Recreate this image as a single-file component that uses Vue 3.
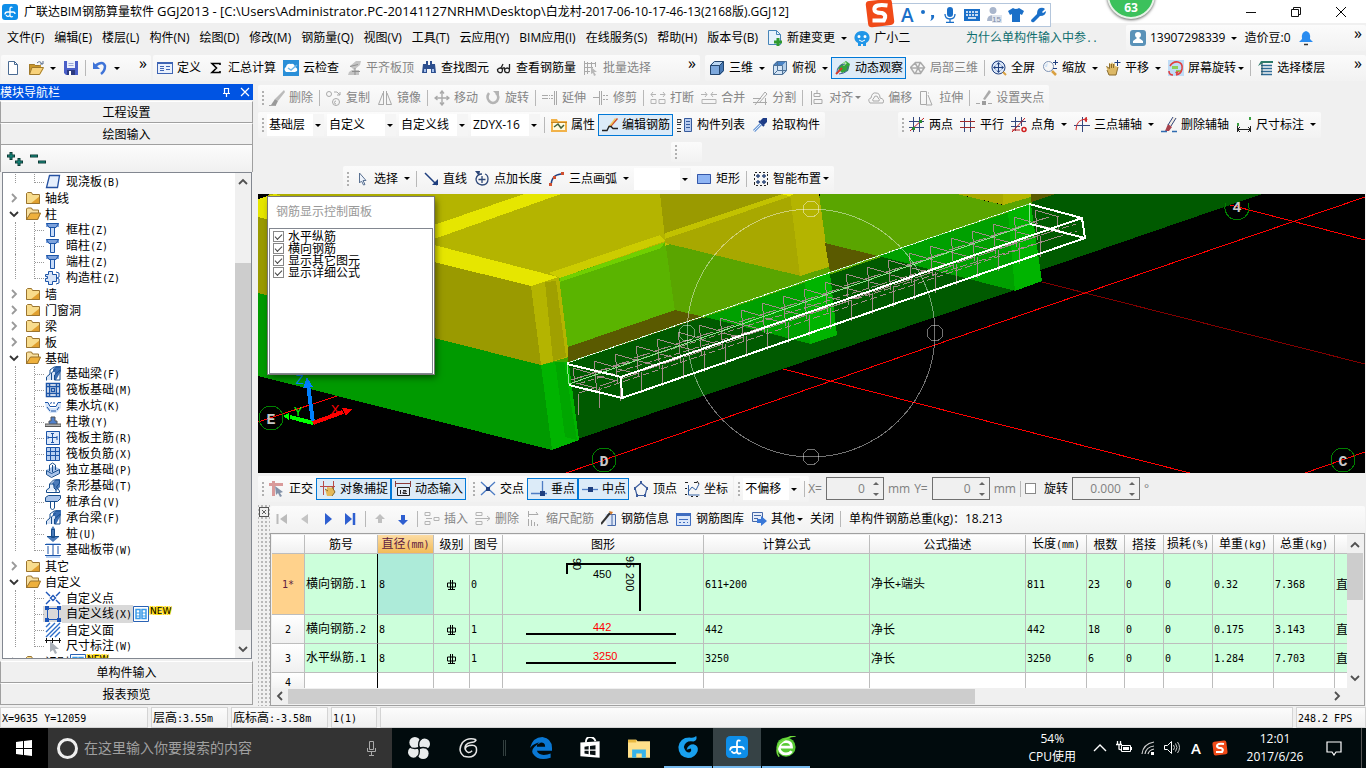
<script setup>
import { h, ref } from 'vue';

// 图标绘制辅助：s 描边，f 填充
const s = (d, c, w = 1) => `<path d="${d}" fill="none" stroke="${c}" stroke-width="${w}"/>`;
const f = (d, c) => `<path d="${d}" fill="${c}"/>`;
const navy = '#1f3f7f';
const gray = '#a9a9a9';
const tree = '#1c55a8';

const icons = {
  new: f('M3 1h7l3 3v11H3z', '#fff') + s('M3.5 1.5h6l3 3v10h-9zM9.500 1.500v3h3', '#4a6b93'),
  open: f('M1 4h5l1 1h6v3H4l-3 7z', '#c9962a') + f('M4 8h12l-4 7H1z', '#f8d27a') + s('M4 7.500h11.500l-4 7H1.500zM1.500 14V4.500h5l1 1h4', '#a07a2c') + s('M9 3q3-3 5 1m1-3v3h-3', '#5b6f8c'),
  save: f('M1 1h14v14H3l-2-2z', '#4a5fc8') + f('M4 1h8v7H4z', '#eef2fb') + f('M4 10h8v5H4z', '#2b3a80') + f('M6 11h2v4H6z', '#fff') + s('M5.500 3.500h5M5.500 5.500h5', '#9aa7d8'),
  undo: s('M3 6q8-6 10 0 0 5-4 8', '#3f74d8', 2.500) + f('M1 2v7h7z', '#3f74d8'),
  define: f('M0 2h16v12H0z', '#3e64b4') + f('M1 4h14v9H1z', '#e9f0fc') + s('M3 6.500h4M3 8.500h4M3 10.500h4M9 6.500h4M9 9.500h4', '#3e64b4'),
  sigma: s('M12 5V3.500H4L8.500 8 4 12.500h8V11', '#000', 1.600),
  cloud: f('M0 0h16v16H0z', '#2a8fd8') + f('M3 12Q0 9 3 7q1-4 5-3 3-1 4 3 3 1 2 4l-2 1z', '#fff') + s('M5 8l3 2 6-5', '#6fb7e8', 1.500),
  flat: f('M4 6l6-5h5l-1 4-6 5zM6 10h7v5H2l1-3z', '#c4c4c4') + s('M4 6.500l8-2M6 11.500h8M9 8v7', '#8f8f8f'),
  find: f('M2 4h3v-3h2v4h2v-4h2v3h3l1 9h-5v-4H6v4H1z', '#2d4f8e') + f('M3 9h2v3H3zM11 9h2v3h-2z', '#a5c0ee'),
  glasses: s('M1.500 9.500q3-3 5 0 0 4-3 3-2 0-2-3zM8.500 9.500q3-3 5 0 0 4-3 3-2 0-2-3zM6 9l1-1h2M5 8l2-4M13.500 9V4', '#222', 1.300),
  batch: s('M1.500 1v14M1 3.500h12M4.500 2v12M1 7.500h9M8.500 2v7M1 11.500h6M12.500 2v5', gray) + f('M8 7l6 5-3 0 2 3-2 1-1-3-2 1z', '#b9b9b9'),
  cube: f('M1 5l4-4h10l-4 4z', '#bcd7f2') + f('M1 5h10v10H1z', '#7da8dc') + f('M11 5l4-4v10l-4 4z', '#4678b4') + s('M1.500 5.500h9v9h-9zM1.500 5.500l4-4h9v9l-4 4M10.500 5.500l4-4', '#24466e'),
  topview: f('M1 5l4-4h10l-4 4z', '#4a84c6') + f('M1 5h10v10H1z', '#d6e6f6') + f('M11 5l4-4v10l-4 4z', '#b4cfe9') + s('M1.500 5.500h9v9h-9zM1.500 5.500l4-4h9v9l-4 4M5.500 1.500v9l-4 4M5.500 10.500h9', '#4e7298'),
  orbit: f('M5 5l6-4 4 3-2 7-6 2-4-4z', '#35a43a') + f('M7 4l3-2 2 1-3 3z', '#b9eeb0') + s('M1 14l6-6', '#d23a2a', 2) + s('M2 12q0-7 8-8m3 2q1 7-9 8', '#44639a'),
  part3d: s('M5.500 2.500h5l4 5-4 6h-6l-4-6zM5 3l3 5-3 6M10 3L8 8l3 5M1 8h13', '#aaa', 1.500),
  full: f('M7 0a7 7 0 100 14A7 7 0 007 0z', '#dbe7f8') + s('M7.500 1a6.500 6.500 0 100 13 6.500 6.500 0 000-13zM7.500 3v9M3 7.500h9M6 4.500l1.500-2 1.500 2M6 10.500l1.500 2 1.500-2M4.500 6l-2 1.500 2 1.500M10.500 6l2 1.500-2 1.500', navy) + s('M12 12l3 3', '#d9a040', 2),
  zoom: s('M6.500 1.500a5 5 0 100 10 5 5 0 000-10z', '#7e93b4') + f('M6 3q-3 1-3 4h2z', '#cfe2f6') + s('M10 11l4 4', '#d9a040', 2.500) + s('M13.500 0v5M11 2.500h5M11 8.500h4', navy),
  pan: f('M1 6l3 2V3l2 1 1-2 1 2 2-1v3l3 1-2 8H4z', '#dcb866') + s('M1.500 6.500l3 2V3.500M6.500 4v4M8.500 4v4M13 7l-2 8H4l-2-5', '#8a6b2a') + s('M12.500 0v6M9.500 2.500h6', navy),
  screen: f('M0 0h16v16H0z', '#bfdcf6') + f('M4 6h6v3H4zM8 10h5v2H8z', '#8ccf57') + s('M2 6q3-5 8-4 5 1 4 7-1 5-6 6m-7-4q0 4 4 4', '#e14040', 1.600) + f('M7 12l4-1-2 4z', '#e14040'),
  floors: f('M4 1h12v2H6L1 6z', '#2d7a6a') + s('M4 5.500h11M4 8.500h11M4 11.500h11M4 14.500h11', '#2f6b96', 1.500) + s('M5 3v12', '#24505c'),
  brush: f('M15 0l1 2-7 9-3-2z', '#bbb') + f('M6 9l3 2-2 4H2z', '#999') + s('M0 15.500h7', gray),
  copy: s('M3 1.500a2.500 2.500 0 100 5 2.500 2.500 0 000-5zM10 8.500a3.500 3.500 0 100 7 3.500 3.500 0 000-7zM10 11a1.500 1.500 0 100 3M8 2h3l3 3m0-3v3h-3', gray),
  mirror: s('M6.500 1v14M9.500 1v14M6 3L1.500 14.500H6M10 3l4.500 11.500H10', gray),
  move: s('M8 1v14M1 8h14M6 3.500L8 1l2 2.500M6 12.500L8 15l2-2.500M3.500 6L1 8l2.500 2M12.500 6L15 8l-2.500 2', gray, 1.400),
  rotate: s('M4 3q-3 4 0 8 4 4 8 0 3-5-1-8', '#b4b4b4', 2.500) + f('M8 1h6v6z', '#b4b4b4'),
  extend: s('M0 5.500h6M0 8.500h6M12.500 1v14M14.500 1v14', gray) + s('M7 5.500h1m1 0h2M7 8.500h1m1 0h2', gray),
  trim: s('M8.500 1v14M6.500 1v14M0 7.500h6M10 5.500h2m1 0h2M10 9.500h2m1 0h2', gray),
  break: s('M1 4.500h5M10 4.500h5M3 2L1 4.500 3 7M13 2l2 2.500-2 2.500M1 9.500h5v4H1zM9 9.500h6v4H9z', '#b4b4b4'),
  merge: s('M0 4.500h6M10 4.500h6M4 2l2 2.500L4 7M12 2l-2 2.500 2 2.500M1 9.500h14v4H1z', '#b4b4b4'),
  split: s('M1 8.500h8M1 12.500h14M13.500 8v7M3 15L13 2l2 2-8 9', gray),
  align: s('M2.500 1v14M5 3.500h6v3H5zM5 9.500h8v4H5zM8 0v3', gray),
  offset: s('M2 13q-3-4 1-5 1-6 5-5 4 0 4 5 5 1 3 5zM5 11q-1-2 1-3 0-2 2-2t2 2q2 1 1 3z', gray),
  stretch: s('M1.500 1.500h6v13h-6zM9 5l4 10H7M9 3h1', gray),
  gripset: f('M13 0l2 2-6 8-2-1z', '#aaa') + s('M0 13.500h4M12 13.500h4', gray) + f('M6 11h4v4H6z', '#9c9c9c'),
  prop: f('M0 2h6l1 2h9v11H0z', '#f1b24a') + f('M2 6h12v7H2z', '#fffbe0') + s('M3 10l4-3 3 4 3-3', '#45603a', 1.500) + s('M0 5.500h16', '#c98520'),
  editbar: f('M15 1l1 1-7 8-2-1z', '#d04b28') + f('M13 1l1 1-6 8-2 0z', '#f0c860') + s('M0 13.500h5l2-4h2l2 2h5', '#222', 1.400),
  list: s('M0 2.500h4v3H0zM0 7.500h4M0 11.500h4M0 14.500h4', '#333') + f('M7 1h8v13H7z', '#b9cdf0') + s('M7.500 1.500h7v13h-7zM9 4.500h4M9 7.500h4M9 10.500h4', '#365a9c'),
  picker: f('M11 1h4v4l-3 3-4-4z', '#1e3c86') + s('M7 4l5 5', '#1e3c86', 2) + s('M9 7l-7 7', '#6c9ad8', 3) + s('M9 7l-7 7', '#dfeaf8'),
  axis2: s('M4.500 0v15M10.500 0v15M0 4.500h15M0 10.500h15', '#33477e') + s('M1 14L15 1', '#c02020') + f('M3 10h3v3H3zM10 3h3v3h-3z', '#2a8a30'),
  axisPar: s('M4.500 1v14M10.500 1v14', '#33477e') + s('M0 4.500h15M0 10.500h15', '#a02a2a'),
  axisAngle: s('M4.500 0v14M10.500 0v9M0 4.500h15M0 9.500h9', '#33477e') + s('M1 15L14 1M1 13h8', '#c02020') + s('M13 10.500a2 2 0 100 4 2 2 0 000-4z', '#d02020', 1.500),
  axis3: s('M8.500 0v15M0 8.500h16', '#33477e') + s('M2 13Q2 2 13 2', '#d03030') + s('M2 12.500h.1M13 1.500a1 1 0 100 2', '#d03030', 3),
  axisDel: f('M12 0l4 1-6 9-3-1z', '#f2ede4') + f('M7 7l4 3-3 4H4z', '#a8424c') + s('M15 1l-5 8M12 0L7 8', '#33477e') + s('M0 14.500h6M11 14.500h5', '#2f6bb0', 1.500),
  dim: s('M1.500 9v6M14.500 9v6M1 12.500h14M4 10l-2.500 2.500L4 15M12 10l2.500 2.500L12 15', '#222') + f('M1 6h2v3H1zM13 0h2v3h-2z', '#3aa040'),
  select: f('M5 2l7 7H9l2 4-2 1-2-4-2 2z', '#eef3fb') + s('M5.500 2v10l2-2 2 4 1.500-.5-2-4h3z', '#5b7292'),
  line: s('M2 2l12 12', navy, 1.500) + f('M9 14h6V8z', navy),
  pointlen: s('M8 3q-5 0-6 5 0 5 6 6 6 0 6-6 0-4-3-5M8 5v7M4.500 8.500h7', '#2d4778', 1.300) + f('M1 0h5l-1 5z', '#2d4778'),
  arc: s('M2 15Q2 4 12 3', navy, 1.300) + f('M0 12h3v3H0zM4 5h3v3H4zM12 1h3v3h-3z', '#d05030'),
  rect: f('M1 3h14v10H1z', '#8fb5f4') + s('M1.500 3.500h13v9h-13z', '#3557a8'),
  smart: s('M2 1.500h2m2 0h2m2 0h2m2 0h1M1.500 3v2m0 2v2m0 2v3M14.500 3v2m0 2v2m0 2v3M3 14.500h2m2 0h2m2 0h2', '#222') + s('M5 3v4M3 5h4M11 3v4M9 5h4M5 9v4M3 11h4M11 9v4M9 11h4', '#2d4778', 1.400),
  ortho: s('M0 3.500h14M4.500 0v15', '#d99a9a', 3) + f('M6 5l8 6-3 1 2 3-2 1-2-4-2 2z', '#8392a8'),
  snap: s('M3.500 0v14M13.500 0v8M0 5.500h15', '#b84a4a') + f('M5 8l2 1V6l6 1 2 4-3 4H7z', '#e4b95a') + s('M5 8l3 2M12 6l3 5-3 4', '#86682a'),
  dynin: s('M0 2.500h16M.5 0v6M15.500 0v6', '#8c3a3a') + f('M2 6h13v9H2z', '#e6edf6') + s('M2.500 6.500h12v8h-12z', '#222') + s('M5.500 9v4M8 9.500h3v1.500H8v1.500h4', '#222'),
  cross: s('M1 1l14 13M15 1L1 14', '#4d7cc4', 1.300) + f('M6 6h4v4H6z', navy),
  perp: s('M0 12.500h16M11.500 0v12', '#4d7cc4', 1.300) + f('M9 10h5v5H9z', navy),
  mid: s('M0 8.500h16', '#4d7cc4', 1.300) + f('M6 6h5v5H6z', navy),
  vertex: s('M8 2l6 5-2 7.500H4L2 7z', '#3c5c9c', 1.200) + f('M7 0h2v3H7zM1 6h2v3H1zM13 6h2v3h-2zM3 13h2v3H3zM11 13h2v3h-2z', '#3c5c9c'),
  coord: s('M4.500 4v10h11M4 11l4-5 4 3 3-6', '#3563a5') + s('M1 1.500h3M10 1.500h3M1 7.500h2M1 13.500h2M7 15.500h2M12 15.500h2M13 0l2 3', '#222'),
  first: s('M3.500 3v10', '#bbb', 2) + f('M13 3v10L6 8z', '#bbb'),
  prev: f('M11 3v10L4 8z', '#c4c4c4'),
  play: f('M5 2v12l7-6z', '#2e5fd0'),
  last: f('M2 2v12l7-6z', '#2e5fd0') + s('M11 2v12', '#2e5fd0', 2.500),
  up: f('M8 3l5 5h-3v4H6V8H3z', '#c0c0c0'),
  down: f('M8 14L3 9h3V4h4v5h3z', '#2e5fd0'),
  insert: s('M1 1.500h5v3H1zM1 10.500h5v3H1zM10 6.500h5v3h-5zM2 7.500h6', '#b4b4b4'),
  remove: s('M1 1.500h6v3H1zM1 10.500h6v3H1zM0 7.500h15M12 5l3 2.500-3 2.500', '#b4b4b4'),
  scale: s('M2.500 0v6M2 3.500h10M10 1l2 2.500M2.500 8v7M5.500 9v6M8.500 11v4M11.500 13v2', '#aaa'),
  info: f('M4 3h10v12H6z', '#dfe8f7') + s('M6.500 3.500h8v11h-8M11 4v10', '#4668a8') + s('M0 13L9 2', '#333', 2) + f('M8 0l4 1-2 3z', '#d07828'),
  lib: f('M0 2h15v13H0z', '#dbe7fa') + f('M0 2h15v3H0z', '#3f6dc0') + s('M.5 2.500h14v12H.5zM3 8.500h9M3 11.500h2m2 0h2m2 0h1', '#3f6dc0'),
  other: f('M1 1h11v10H1z', '#e6edf9') + s('M1.500 1.500h10v9h-10zM3 4.500h7M3 7.500h4', '#4668a8') + f('M6 8h4V5l6 5-6 5v-3H6z', '#3a78d8'),
  change: f('M3 0h7l3 3v12H1V0z', '#e6f2fc') + s('M1.500 .5h8l4 4v10h-12zM9.500 .5v4h4', '#4684b8') + s('M11 8v8M7 12h8', '#2f9a30', 3),
  mascot: f('M1 5Q3 1 8 1t7 4q2 5-3 8v3H9v-2H7v2H4v-3Q-1 10 1 5z', '#2196e8') + f('M5 5a1.500 1.500 0 100 3 1.500 1.500 0 000-3zM11 5a1.500 1.500 0 100 3 1.500 1.500 0 000-3z', '#fff') + s('M5 10q3 3 6 0', '#fff'),
  account: '<rect width="16" height="16" rx="3" fill="#5a92b8"/>' + f('M8 2a3 3 0 013 3q0 2-2 3l4 3v2H3v-2l4-3Q5 7 5 5a3 3 0 013-3z', '#fff'),
  bell: f('M8 1q5 1 4 8l3 3H1l3-3Q3 2 8 1z', '#2a8cf0') + s('M6 14.500h4', '#333', 1.500),
  // 导航树
  folder: f('M1 3h6l1 2h7v9H1z', '#f8dc8c') + f('M5 14l10-8v8z', '#e0a030') + s('M1.500 13.500v-10l1-1h4l1 2h7v9z', '#9a7430'),
  folderOpen: f('M1 2h6l1 2h6v3H5l-4 7z', '#f8e0a0') + f('M5 7h11l-3 7H1z', '#eeb03c') + s('M1.500 14V3l1-1h4l1 2h6v3M1.500 13.500l4-6.500h10l-3 6.500z', '#9a7430'),
  slab: f('M4 1h11l-2 13H1z', '#e6effc') + s('M4.500 1.500h10l-2 12H1.500z', '#2450a0', 1.300),
  column: f('M1 1h13v4H1z', '#7da2dc') + f('M5 5h5v10H5z', '#c9dcf8') + s('M1.500 1.500h12L11 5.500H4zM5.500 5.500v9h4v-9', tree),
  columnX: f('M4 1h4v3h4v8H8v3H3v-4H1V5h3z', '#d7e4f7') + s('M3.500 1.500h4v3h4v7h-4v3h-4v-3h-3v-3h2v-2h-2v-2h3zM11 2l3 1v4l-2 1 2 1v4l-3 1', tree),
  beam: f('M8 3l3-3h5v5l-5 9H8z', '#3a6eb4') + f('M1 14h9V6H5z', '#d7e4f7') + s('M1.500 14.500V11L5 8V4l4-3h6M6.500 14V7l4-4M9.500 14V9L15 4v10h-5z', '#174d8c'),
  raft: s('M1.500 1.500h13v13h-13zM4.500 2v12M11.500 2v12M2 4.500h12M2 11.500h12M6.500 6.500h3v3h-3z', tree, 1.500),
  pit: f('M0 5h3l2 5h6l2-5h3v5l-5 5H5l-4-5z', '#d5e5fa') + s('M0 4.500h3l2 4h6l2-4h3M2 9l3 4M6 13h5M12 12l2-3M5 5.500l2-1M9 4v2', tree),
  pier: f('M6 3h4v4h2v3H4V7h2z', '#4f80cc') + f('M0 10h16v3H0z', '#b4b4b4') + s('M0 12.500h16V10H0zM4 9.500V7h2V3h4v4h2v3', '#555'),
  mainbar: f('M1 1h14v14H1z', '#dce9fb') + s('M1.500 1.500h13v13h-13zM7.500 3v10M3 7.500h9M3 6v3M12 6v4M6 3.500h3M6 12.500h3', tree),
  negbar: f('M1 1h14v14H1z', '#b7d0f2') + s('M1.500 1.500h13v13h-13zM5.500 2v12M10.500 2v12M2 5.500h12M2 9.500h12', tree),
  isolated: f('M1 8l8-4 6 3v4l-9 4-5-3z', '#a9c4ea') + s('M1.500 8.500l5 3 8-4v4l-8 4-5-3zM4.500 9V3l3-2 3 2v5M7.500 3v7', '#174d8c'),
  strip: f('M1 13h9L7 6H5z', '#e6f0fc') + f('M7 5l4-4h4v8l-4 4z', '#4d7cba') + s('M1.500 14.500V12l3-2V6l4-4h6v3l-3 4 3 4v1.500zM5 6h4v4l2 2v2', '#174d8c'),
  cap: f('M1 3l3-2h11v4l-2 2H1z', '#a9c4ea') + s('M.5 3.500l3-2h12v3l-3 3H.5zM5.500 7v7l2 2 2-2V7', '#174d8c'),
  pile: f('M6 3l2-3 2 3v7l4 1-6 5-6-5 4-1z', '#4a7ab8') + s('M6.500 3.500h3v8h-3zM2 10.500h12', '#174d8c'),
  band: f('M1 13h14v3H1zM1 1h14v2H1z', '#b7d0f2') + s('M0 2.500h16M0 13.500h16M8 3v10M3 4v8M13 4v8', tree),
  point: s('M1 2l4 4M15 2l-4 4M1 14l4-4M15 14l-4-4M8 5.500L10.500 8 8 10.500 5.500 8z', '#1c55b8', 1.400),
  lineDef: s('M2.500 2.500h11v11h-11z', '#1c55b8') + f('M0 0h4v4H0zM12 0h4v4h-4zM0 12h4v4H0zM12 12h4v4h-4z', '#1c55b8'),
  face: s('M1 5l4-4M1 10l9-9M1 15L15 1M5 15L15 5M10 15l5-5', '#2c6cc8', 1.400),
  dimTree: s('M1.500 0v5M7.500 0v5M14.500 0v5M0 2.500h16', '#111') + f('M5 3v11l3-2 2 4 2-1-2-4h4z', '#aab0b8'),
  table: f('M0 0h16v16H0z', '#fff') + s('M.5 .5h15v15H.5z', '#2a62b4') + s('M3 3.500h4v9H3zM9 3.500h4v9H9z', '#3a9ae8', 1.500) + s('M3 7h4M9 7h4M3 10h4M9 10h4', '#3a9ae8'),
  // 标题与任务栏
  app: '<rect width="16" height="16" rx="3" fill="#0e8ee9"/>' + s('M10.500 3.500Q8 2.500 8 5v6q0 2.500 3 1.500M3 10.500Q3 8 5.500 8H11q2 0 2 2M8 11.500q-2.500 2-4-.5', '#fff', 1.300),
  win: f('M0 2l7-1v7H0zM8 1l8-1v8H8zM0 9h7v6l-7-1zM8 9h8v7l-8-1z', '#fff'),
  fan: '<g fill="#e9ecec"><circle cx="5" cy="4" r="4"/><circle cx="12" cy="5" r="4"/><circle cx="11" cy="12" r="4"/><circle cx="4" cy="11" r="4"/></g>' + s('M8 8Q7 3 10 1M8 8q5-1 7 1M8 8q1 5-2 7M8 8Q3 9 1 7', '#0a1214'),
  swirl: s('M14 2Q8 0 4 4q-4 6 1 10 7 2 9-3 1-5-3-5-5 0-5 3 2 4 5 1M14 2q-1 2-4 2-5 1-4 5', '#e6e6e6', 1.100),
  edge: f('M0 8Q2 0 9 0q7 1 7 8v2H5q1 3 5 3 3 0 5-1v3q-9 3-13-3Q0 8 8 4 3 4 0 8zM5 7h6q0-3-3-3T5 7z', '#0a78d4'),
  store: f('M1 4l14-1v12L1 14z', '#fff') + s('M5 4q0-4 3-4 3 0 4 3', '#fff', 1.300) + f('M4 7l3-.4V9H4zM8 6.500l4-.5v3H8zM4 10h3v2.600L4 12zM8 10h4v3.300l-4-.6z', '#0a1214'),
  files: f('M0 2h6l1 1h9v12H0z', '#ffe08a') + f('M3 9h10v6h-3v-3H6v3H3z', '#36b2ea') + f('M0 2h6v2H0z', '#e8b840'),
  glodon: f('M14 0q1 3-2 4-6-1-7 4 1 4 4 4 2-1 1-3l-3 1q1-4 5-4 4 1 3 5-2 5-7 5-7-1-7-8 1-7 8-7 3 1 5-1z', '#18a0ee'),
  browser: '<circle cx="8" cy="8" r="7" fill="#57c934"/>' + s('M3 8h9q0-4-4-4-5 0-5 5 1 4 5 4 3 0 4-2', '#fff', 2) + s('M15 0Q9 0 3 6q-3 5 0 9', '#6fdc3c', 1.200),
  sogou: '<rect x="1" y="1" width="14" height="14" rx="2" fill="#f04a18" transform="rotate(-7 8 8)"/>' + s('M12 4Q5 3 5 6q0 2 4 2 3 1 1 4H4', '#fff', 2.200),
  mic: '<rect x="5" y="0" width="6" height="10" rx="3" fill="currentColor"/>' + s('M3 7q0 5 5 5t5-5M8 12v3M4 15.500h8', 'currentColor', 1.300),
  micLine: s('M5.500 1.500h4v8h-4zM3.500 8v3.500h8V8M7.500 12v3M5 15.500h5', '#aaa'),
  punct: f('M3 3a2 2 0 110 4 2 2 0 010-4zM11 8h3q1 4-4 6 2-2 1-6z', '#1a6fc8'),
  keys: f('M0 2h16v12H0z', '#1a6fc8') + s('M2 5h12M2 8h12', '#fff', 1.500) + s('M4 11h8', '#fff', 1.500) + s('M4.500 3v6M7.500 3v6M10.500 3v6', '#1a6fc8'),
  person: f('M7 0a3 3 0 010 7 3 3 0 010-7zM1 14q0-6 6-6 5 0 6 6z', '#a9b6cc') + f('M6 8h10v8H6z', '#dfe5ee') + '<text x="6" y="15" font-size="8" font-family="Liberation Sans" fill="#7c8ca8">15</text>',
  shirt: f('M5 1q3 2 6 0l5 3-2 4-2-1v8H4V7L2 8 0 4z', '#1a6fc8'),
  wrench: f('M10 1q3-1 5 1l-3 3 1 1 3-2q0 5-6 5l-6 6q-3 1-3-2l6-6q0-5 3-6z', '#1a6fc8'),
  battery: s('M5.500 5.500h9v6h-9z', '#fff') + f('M7 7h6v3H7zM14 7h2v3h-2z', '#fff') + s('M1.500 1v3M4.500 1v3M0 4.500h6M3 5v4l2 1', '#fff', 1.300),
  wifi: s('M2 14Q3 4 14 2M5 14q1-7 9-8M8 14q1-4 6-5', '#cfcfcf', 1.200) + f('M11 12h3v3h-3z', '#fff'),
  volume: s('M.5 5.500h3l4-4v12l-4-4h-3z', '#fff') + s('M9.500 5q2 2.500 0 5M11.500 3.500q3 4 0 8M13.500 2q4 5.500 0 11', '#ccc'),
  chevUp: s('M4 10l4-4 4 4', 'currentColor', 1.800),
  chevWide: s('M2 11l6-6 6 6', 'currentColor', 1.400),
  chevDown: s('M4 6l4 4 4-4', 'currentColor', 1.800),
  chevLeft: s('M10 4L6 8l4 4', 'currentColor', 1.800),
  chevRight: s('M6 4l4 4-4 4', 'currentColor', 1.800),
  notice: s('M1 2h14v10h-5l-2 3-2-3H1z', '#fff', 1.200),
  plus: s('M4 1v8M0 5h8M12 7v8M8 11h8', '#0d3a35', 3) + s('M4 2v6M1 5h6M12 8v6M9 11h6', '#16968a'),
  minus: s('M0 5h8M8 11h8', '#0d3a35', 3) + s('M1 5h6M9 11h6', '#16968a'),
  pin: s('M5.500 4v5M9.500 4v5M4 9.500h7M5 4.500h5M7.500 10v3', '#fff', 1.200),
  close: s('M4 4l8 8M12 4l-8 8', 'currentColor', 1.200),
  closeBig: s('M3 3l10 10M13 3L3 13', 'currentColor'),
  min: s('M3 8.500h10', '#111'),
  restore: s('M3.500 5.500h7v7h-7zM5.500 5V3.500h7v7H11', '#111')
};

const Icon = (props) => h('svg', { class: 'icon', viewBox: '0 0 16 16', innerHTML: icons[props.name] });
Icon.props = ['name'];

// 宋体风格：西文部分使用半角等宽字体
const Song = (props) => h('span', { class: 'song' }, props.text.split(/([\x20-\x7e]+)/).filter(Boolean).map(
  (t) => /^[\x20-\x7e]/.test(t) ? h('span', { class: 'half' }, t) : t
));
Song.props = ['text'];

const renderItem = (it) => {
  if (it === '|') return h('span', { class: 'sep' });
  if (it === ':') return h('span', { class: 'grip' });
  if (it === '>>') return h('span', { class: 'more' }, '»');
  if ('combo' in it) {
    return h('span', { class: ['combo', it.size] }, [
      h('select', { 'aria-label': it.name }, [h('option', it.combo)])
    ]);
  }
  if (it.text) return h('span', { class: 'caption' }, it.text);
  return h('button', {
    type: 'button',
    class: ['tool', { active: it.on, tight: it.tight }],
    disabled: it.off,
    title: it.label || it.icon
  }, [
    it.icon && h(Icon, { name: it.icon }),
    it.label && h('span', it.label),
    it.drop && h('i', { class: 'drop' })
  ]);
};
const Strip = (props) => h('div', { class: 'strip' }, props.items.map(renderItem));
Strip.props = ['items'];

const b = (icon, label, extra = {}) => ({ icon, label, ...extra });
const off = { off: true };
const on = { on: true };
const drop = { drop: true };
const tight = { drop: true, tight: true };

const menus = ['文件(F)', '编辑(E)', '楼层(L)', '构件(N)', '绘图(D)', '修改(M)', '钢筋量(Q)', '视图(V)', '工具(T)', '云应用(Y)', 'BIM应用(I)', '在线服务(S)', '帮助(H)', '版本号(B)'];

const fileTools = [b('new'), b('open', '', drop), b('save'), '|', b('undo', '', drop), '>>'];
const mainTools = [b('define', '定义'), b('sigma', '汇总计算'), b('cloud', '云检查'), b('flat', '平齐板顶', off), b('find', '查找图元'), b('glasses', '查看钢筋量'), b('batch', '批量选择', off), '>>'];
const viewTools = [b('cube', '三维', drop), b('topview', '俯视', drop), b('orbit', '动态观察', on), b('part3d', '局部三维', off), '|', b('full', '全屏'), b('zoom', '缩放', drop), b('pan', '平移', drop), b('screen', '屏幕旋转', tight), '|', b('floors', '选择楼层'), '>>'];
const editTools = [':', b('brush', '删除', off), '|', b('copy', '复制', off), b('mirror', '镜像', off), '|', b('move', '移动', off), b('rotate', '旋转', off), '|', b('extend', '延伸', off), b('trim', '修剪', off), '|', b('break', '打断', off), b('merge', '合并', off), b('split', '分割', off), '|', b('align', '对齐', { ...off, ...tight }), b('offset', '偏移', off), b('stretch', '拉伸', off), '|', b('gripset', '设置夹点', off)];
const partTools = [':', { combo: '基础层', size: 's', name: '楼层' }, { combo: '自定义', size: 'm', name: '构件类型' }, { combo: '自定义线', size: 'm', name: '构件' }, { combo: 'ZDYX-16', size: 'm', name: '构件名称' }, '|', b('prop', '属性'), b('editbar', '编辑钢筋', on), b('list', '构件列表'), b('picker', '拾取构件')];
const axisTools = [':', b('axis2', '两点'), b('axisPar', '平行'), b('axisAngle', '点角', drop), b('axis3', '三点辅轴', drop), b('axisDel', '删除辅轴'), b('dim', '尺寸标注', drop)];
const drawTools = [':', b('select', '选择', drop), '|', b('line', '直线'), b('pointlen', '点加长度'), b('arc', '三点画弧', drop), { combo: '', size: 's', name: '画法' }, b('rect', '矩形'), '|', b('smart', '智能布置', tight)];
const snapTools = [':', b('ortho', '正交'), b('snap', '对象捕捉', on), b('dynin', '动态输入', on)];
const pointTools = [':', b('cross', '交点'), b('perp', '垂点', on), b('mid', '中点', on), b('vertex', '顶点'), b('coord', '坐标')];
const offsetTools = [':', { combo: '不偏移', size: 's', name: '偏移方式' }, '|'];
const gridTools = [b('first', '', off), b('prev', '', off), b('play'), b('last'), '|', b('up', '', off), b('down'), '|', b('insert', '插入', off), b('remove', '删除', off), b('scale', '缩尺配筋', off), b('info', '钢筋信息'), b('lib', '钢筋图库'), b('other', '其他', tight), b('', '关闭'), '|', { text: '单构件钢筋总重(kg)：18.213' }];

const nodes = [
  { name: '现浇板(B)', icon: 'slab', last: true },
  { name: '轴线', dir: 'closed' },
  { name: '柱', dir: 'open' },
  { name: '框柱(Z)', icon: 'column' },
  { name: '暗柱(Z)', icon: 'column' },
  { name: '端柱(Z)', icon: 'column' },
  { name: '构造柱(Z)', icon: 'columnX', last: true },
  { name: '墙', dir: 'closed' },
  { name: '门窗洞', dir: 'closed' },
  { name: '梁', dir: 'closed' },
  { name: '板', dir: 'closed' },
  { name: '基础', dir: 'open' },
  { name: '基础梁(F)', icon: 'beam' },
  { name: '筏板基础(M)', icon: 'raft' },
  { name: '集水坑(K)', icon: 'pit' },
  { name: '柱墩(Y)', icon: 'pier' },
  { name: '筏板主筋(R)', icon: 'mainbar' },
  { name: '筏板负筋(X)', icon: 'negbar' },
  { name: '独立基础(P)', icon: 'isolated' },
  { name: '条形基础(T)', icon: 'strip' },
  { name: '桩承台(V)', icon: 'cap' },
  { name: '承台梁(F)', icon: 'beam' },
  { name: '桩(U)', icon: 'pile' },
  { name: '基础板带(W)', icon: 'band', last: true },
  { name: '其它', dir: 'closed' },
  { name: '自定义', dir: 'open' },
  { name: '自定义点', icon: 'point' },
  { name: '自定义线(X)', icon: 'lineDef', selected: true, fresh: true },
  { name: '自定义面', icon: 'face' },
  { name: '尺寸标注(W)', icon: 'dimTree', last: true },
  { name: '识别', dir: 'closed', fresh: true }
];

const columns = [
  ['', 33], ['筋号', 73], ['直径(mm)', 56], ['级别', 36], ['图号', 33], ['图形', 201], ['计算公式', 166], ['公式描述', 156],
  ['长度(mm)', 61], ['根数', 38], ['搭接', 39], ['损耗(%)', 49], ['单重(kg)', 61], ['总重(kg)', 61], ['', 60]
];
const bars = [
  { no: '1*', name: '横向钢筋.1', type: '0', formula: '611+200', desc: '净长+端头', rest: ['811', '23', '0', '0', '0.32', '7.368'] },
  { no: '2', name: '横向钢筋.2', type: '1', shape: '442', formula: '442', desc: '净长', rest: ['442', '18', '0', '0', '0.175', '3.143'] },
  { no: '3', name: '水平纵筋.1', type: '1', shape: '3250', formula: '3250', desc: '净长', rest: ['3250', '6', '0', '0', '1.284', '7.703'] }
];

const layers = ref([
  { name: '水平纵筋', show: true },
  { name: '横向钢筋', show: true },
  { name: '显示其它图元', show: true },
  { name: '显示详细公式', show: true }
]);
const offsetX = ref('0');
const offsetY = ref('0');
const angle = ref('0.000');
const rotateOn = ref(false);

// 箍筋沿构件方向等距排列
const stirrups = Array.from({ length: 23 }, (_, i) => {
  const x = 573 + i * 21;
  const y = Math.round(368 - i * 7.2);
  return `M${x} ${y}l2 15M${x} ${y}l24 7M${x + 3} ${y + 15}l20 5M${x + 22} ${y + 6}l2 17M${x + 5} ${y + 26}l1 21M${x - 2} ${y + 12}l16 -5M${x + 6} ${y + 25}l18 -6`;
}).join('');
</script>

<template>
  <div class="app">
    <header class="titlebar">
      <Icon name="app" />
      <h1>广联达BIM钢筋算量软件 <span class="path">GGJ2013 - [C:\Users\Administrator.PC-20141127NRHM\Desktop\</span>白龙村-2017-06-10-17-46-13(2168版).GGJ12]</h1>
      <div class="win-btns">
        <button type="button" title="最小化"><Icon name="min" /></button>
        <button type="button" title="还原"><Icon name="restore" /></button>
        <button type="button" title="关闭"><Icon name="closeBig" /></button>
      </div>
      <div class="ime">
        <Icon class="ime-logo" name="sogou" />
        <b>A</b>
        <Icon name="punct" />
        <Icon name="mic" />
        <Icon name="keys" />
        <Icon name="person" />
        <Icon name="shirt" />
        <Icon name="wrench" />
      </div>
      <div class="ball">63</div>
    </header>

    <nav class="menubar">
      <div class="menu-main">
        <button v-for="m in menus" :key="m" type="button" class="menu">{{ m }}</button>
        <Strip :items="[b('change', '新建变更', drop), b('mascot', '广小二')]" />
      </div>
      <a class="tip" href="#"><Song text="为什么单构件输入中参.." /></a>
      <Strip class="user" :items="[b('account', '13907298339', drop), b('', '造价豆:0'), b('bell'), '>>']" />
    </nav>

    <div class="main-tools">
      <Strip class="file" :items="fileTools" />
      <Strip class="main" :items="mainTools" />
      <Strip class="view" :items="viewTools" />
    </div>

    <div class="body">
      <aside class="side">
        <div class="side-title">
          <Song text="模块导航栏" />
          <button type="button" title="固定"><Icon name="pin" /></button>
          <button type="button" title="关闭"><Icon name="close" /></button>
        </div>
        <button type="button" class="side-tab">工程设置</button>
        <button type="button" class="side-tab">绘图输入</button>
        <div class="side-ops">
          <button type="button" title="展开"><Icon name="plus" /></button>
          <button type="button" title="折叠"><Icon name="minus" /></button>
        </div>
        <div class="tree">
          <ul>
            <li v-for="(n, i) in nodes" :key="i" :class="n.dir ? 'branch' : ['leaf', { last: n.last }]">
              <template v-if="n.dir">
                <Icon class="fold" :class="n.dir" :name="n.dir === 'open' ? 'chevDown' : 'chevRight'" />
                <Icon :name="n.dir === 'open' ? 'folderOpen' : 'folder'" />
              </template>
              <span v-else class="node-icon" :class="{ selected: n.selected }"><Icon :name="n.icon" /></span>
              <span class="node-name" :class="{ selected: n.selected }"><Song :text="n.name" /></span>
              <template v-if="n.fresh">
                <Icon name="table" />
                <b class="fresh">NEW</b>
              </template>
            </li>
          </ul>
          <div class="vbar">
            <Icon name="chevUp" />
            <i class="thumb"></i>
            <Icon name="chevDown" />
          </div>
        </div>
        <button type="button" class="side-tab">单构件输入</button>
        <button type="button" class="side-tab">报表预览</button>
      </aside>

      <main class="work">
        <div class="row"><Strip :items="editTools" /></div>
        <div class="row apart">
          <Strip :items="partTools" />
          <Strip class="axis" :items="axisTools" />
        </div>
        <div class="row"><Strip class="stub" :items="[':']" /></div>
        <div class="row"><Strip class="draw" :items="drawTools" /></div>

        <section class="viewport">
          <svg class="scene" viewBox="258 194 1107 279" preserveAspectRatio="xMidYMid slice" shape-rendering="crispEdges">
            <rect x="258" y="194" width="1107" height="279" fill="#000" />
            <!-- 墙体与底板 -->
            <polygon points="558,363 1030,204 1030,194 1262,194 1041,270 1012,291 650,414 575,440" fill="#005a00" />
            <polygon points="558,277 665,240 675,312 568,363" fill="#5ab400" />
            <polygon points="665,240 800,274 820,194 957,194 1003,205 1031,195 1032,205 704,318 675,312" fill="#5aa500" />
            <polygon points="258,290 434,334 545,362 552,450 258,376" fill="#009a00" />
            <polygon points="541,365 568,357 579,440 552,450" fill="#00b400" />
            <polygon points="555,361 564,361 577,440 565,437" fill="#00a600" />
            <polygon points="541,365 568,356 569,362 555,362" fill="#3ca800" />
            <polygon points="258,215 434,258 534,284 541,365 434,338 258,293" fill="#9a9a00" />
            <polygon points="270,194 816,194 558,278 434,246 258,203" fill="#b4b400" />
            <polygon points="258,199 275,194 434,245 558,277 531,286 434,262 258,217" fill="#e6e600" />
            <polygon points="524,194 561,194 434,239 380,256 360,251 434,225" fill="#e6e600" />
            <polygon points="660,194 790,194 665,238" fill="#9a9a00" />
            <polygon points="549,273 660,235 665,241 560,278" fill="#cccc00" />
            <polygon points="665,233 783,194 820,194 665,246" fill="#c2c200" />
            <polygon points="531,286 559,277 569,357 541,365" fill="#b4b400" />
            <polygon points="545,282 556,281 566,357 553,361" fill="#a0a000" />
            <polygon points="560,278 665,242 661,248 560,282" fill="#70d000" />
            <polygon points="665,243 665,239 791,196 801,276" fill="#a8a800" />
            <polygon points="790,194 819,194 829,267 800,276" fill="#b4b400" />
            <polygon points="782,194 794,194 790,196 784,195" fill="#e6e600" />
            <polygon points="957,194 1004,194 1004,205" fill="#a8a800" />
            <polygon points="1003,194 1031,194 1031,197 1003,205" fill="#b4b400" />
            <polygon points="1031,194 1055,194 1031,202" fill="#5a5a00" />
            <polygon points="568,347 675,310 704,317 568,363" fill="#5a5a00" />
            <polygon points="825,243 878,256 830,272" fill="#5a5a00" />
            <polygon points="705,317 806,282 811,344" fill="#00a000" />
            <polygon points="805,282 830,273 837,335 810,344" fill="#00b400" />
            <polygon points="878,256 1009,212 1016,291" fill="#00a000" />
            <polygon points="1008,212 1031,204 1042,281 1015,291" fill="#00b400" />
            <!-- 轴网 -->
            <g class="grid-lines">
              <path d="M566 473L650 444 1050 305 1365 197M783 369L1190 473M1230 205L1365 240M1305 473L1365 452M258 422L337 396" />
              <path class="dim" d="M1042 282L1365 364" />
            </g>
            <g class="axis-mark">
              <circle cx="271" cy="418" r="12" />
              <circle cx="604" cy="460" r="12" />
              <circle cx="1343" cy="460" r="12" />
              <path d="M1226 203a12 12 0 1 0 22 0" />
              <text x="271" y="424">E</text>
              <text x="604" y="466">D</text>
              <text x="1343" y="466">C</text>
              <text x="1237" y="212">4</text>
            </g>
            <!-- 钢筋与构件线框 -->
            <path :d="stirrups" fill="none" stroke="#a08c88" />
            <path d="M575 379L1076 224M578 384L1077 231M595 391L1060 236" fill="none" stroke="#a08c88" stroke-dasharray="7 3" />
            <path d="M569 384L1030 224L1029 204L567 363z" fill="none" stroke="#8ee08e" />
            <path d="M567 363L1029 204" fill="none" stroke="#fff" stroke-dasharray="2 2" />
            <path d="M567 364L621 377 622 398 569 385M621 377L1082 218 1085 238 622 398zM1029 204L1082 218M1030 224L1085 238" fill="none" stroke="#fff" stroke-width="2" />
            <g fill="none" stroke="#fff" stroke-opacity=".45">
              <circle cx="811" cy="333" r="124" />
              <circle cx="811" cy="209" r="8" />
              <circle cx="811" cy="457" r="8" />
              <circle cx="687" cy="333" r="8" />
              <circle cx="935" cy="333" r="8" />
            </g>
            <!-- 坐标系 -->
            <path d="M313 423L308 384" stroke="#0080ff" stroke-width="4" />
            <path d="M303 388L307 377 313 387z" fill="#0080ff" />
            <path d="M313 423L290 417" stroke="#0f0" stroke-width="4" />
            <path d="M283 416L289 413 289 420z" fill="#0f0" />
            <path d="M313 423L343 412" stroke="red" stroke-width="4" />
            <path d="M352 409L342 408 346 416z" fill="red" />
            <g class="axis-name">
              <text x="335" y="414" fill="red">X</text>
              <text x="298" y="416" fill="#0f0">Y</text>
              <text x="300" y="384" fill="#0080ff">Z</text>
            </g>
          </svg>
          <div class="layers">
            <h2>钢筋显示控制面板</h2>
            <div class="layer-list">
              <label v-for="l in layers" :key="l.name">
                <input v-model="l.show" type="checkbox"><span>{{ l.name }}</span>
              </label>
            </div>
          </div>
        </section>

        <div class="row snap">
          <Strip :items="snapTools" />
          <Strip :items="pointTools" />
          <Strip :items="offsetTools" />
          <div class="offset">
            <label for="ox">X=</label>
            <span class="spin"><input id="ox" v-model="offsetX" disabled></span>
            <span>mm</span>
            <label for="oy">Y=</label>
            <span class="spin"><input id="oy" v-model="offsetY" disabled></span>
            <span>mm</span>
            <i class="divider"></i>
            <label class="rot"><input v-model="rotateOn" type="checkbox">旋转</label>
            <span class="spin wide"><input v-model="angle" aria-label="旋转角度" disabled></span>
            <span>°</span>
          </div>
        </div>

        <section class="bars">
          <div class="handle"><Icon name="close" /></div>
          <div class="bars-main">
            <Strip class="bar-tools" :items="gridTools" />
            <div class="grid-box">
              <div class="grid-clip">
                <table>
                  <colgroup>
                    <col v-for="(c, i) in columns" :key="i" :style="{ width: c[1] + 'px' }">
                  </colgroup>
                  <thead>
                    <tr>
                      <th v-for="(c, i) in columns" :key="i" :class="{ current: i === 2 }"><Song :text="c[0]" /></th>
                    </tr>
                  </thead>
                  <tbody>
                    <tr v-for="(r, i) in bars" :key="r.no" :class="{ first: i === 0 }">
                      <th><Song :text="r.no" /></th>
                      <td class="edge"><Song :text="r.name" /></td>
                      <td :class="{ focus: i === 0 }"><Song text="8" /></td>
                      <td class="mid">
                        <svg class="grade" viewBox="0 0 9 10"><path d="M.5 3v4h8V3h-8M3.500 0v9M5.500 0v9M1 9.500h7" fill="none" stroke="#000" /></svg>
                      </td>
                      <td><Song :text="r.type" /></td>
                      <td class="shape">
                        <svg v-if="!r.shape" viewBox="0 0 200 60" class="tall">
                          <path d="M64 20V10h73v47" fill="none" stroke="#000" stroke-width="2" />
                          <text x="90" y="24">450</text>
                          <text transform="translate(70 4) rotate(90)">90</text>
                          <text transform="translate(123 2) rotate(90)">95</text>
                          <text transform="translate(123 19) rotate(90)">200</text>
                        </svg>
                        <svg v-else viewBox="0 0 200 28">
                          <path d="M23 19h150" stroke="#000" stroke-width="2" />
                          <text x="90" y="16" fill="red">{{ r.shape }}</text>
                        </svg>
                      </td>
                      <td><Song :text="r.formula" /></td>
                      <td><Song :text="r.desc" /></td>
                      <td v-for="(v, j) in r.rest" :key="j"><Song :text="v" /></td>
                      <td><Song text="直筋" /></td>
                    </tr>
                    <tr class="blank">
                      <th><Song text="4" /></th>
                      <td v-for="j in 14" :key="j" :class="{ edge: j === 1 }"></td>
                    </tr>
                  </tbody>
                </table>
              </div>
              <div class="vbar">
                <Icon name="chevUp" />
                <i class="thumb"></i>
                <Icon name="chevDown" />
              </div>
              <div class="hbar">
                <Icon name="chevLeft" />
                <i class="thumb"></i>
                <Icon name="chevRight" />
              </div>
            </div>
          </div>
        </section>
      </main>
    </div>

    <footer class="status">
      <span><Song text="X=9635 Y=12059" /></span>
      <span><Song text="层高:3.55m" /></span>
      <span><Song text="底标高:-3.58m" /></span>
      <span><Song text="1(1)" /></span>
      <span></span>
      <span><Song text="248.2 FPS" /></span>
    </footer>

    <div class="taskbar">
      <button type="button" class="start" title="开始"><Icon name="win" /></button>
      <label class="search">
        <i class="ring"></i>
        <input type="text" placeholder="在这里输入你要搜索的内容">
        <Icon name="micLine" />
      </label>
      <div class="apps">
        <button type="button" title="应用"><Icon name="fan" /></button>
        <button type="button" title="旋风"><Icon name="swirl" /></button>
        <i class="bars2"></i>
        <button type="button" title="浏览器"><Icon name="edge" /></button>
        <button type="button" title="商店"><Icon name="store" /></button>
        <button type="button" title="文件"><Icon name="files" /></button>
        <button type="button" class="run" title="广联达"><Icon name="glodon" /></button>
        <button type="button" class="run current" title="钢筋算量"><Icon name="app" /></button>
        <button type="button" class="run" title="安全浏览器"><Icon name="browser" /></button>
      </div>
      <div class="tray">
        <div class="lines cpu"><span>54%</span><span>CPU使用</span></div>
        <Icon name="chevWide" />
        <Icon name="battery" />
        <Icon name="wifi" />
        <Icon name="volume" />
        <b>A</b>
        <Icon name="sogou" />
        <div class="lines clock"><span>12:01</span><span>2017/6/26</span></div>
        <button type="button" class="notice" title="通知"><Icon name="notice" /></button>
      </div>
    </div>
  </div>
</template>

<style>
body {
  margin: 0;
  background: #f0f0f0;
}

button,
input,
select {
  font: inherit;
  color: inherit;
  margin: 0;
  padding: 0;
  border: 0;
  background: none;
}

.icon {
  width: 16px;
  height: 16px;
  flex: none;
  display: block;
}

.song {
  font-family: "Noto Sans CJK SC", sans-serif;
  font-size: 12px;
  white-space: pre;
}

.song .half {
  font-family: "DejaVu Sans Mono", monospace;
  font-size: 10px;
}

.strip {
  display: flex;
  align-items: center;
  height: 26px;
  padding-right: 2px;
  border-radius: 2px;
  background: linear-gradient(#fbfbfb, #f2f2f2);
  white-space: nowrap;
}

.tool {
  display: flex;
  align-items: center;
  gap: 4px;
  height: 22px;
  padding: 0 2px 0 3px;
  border: 1px solid transparent;
}

.tool.active {
  border-color: #0078d7;
  background: #dcebf8;
}

.tool:disabled {
  color: #858585;
}

.tool .drop {
  border: 3px solid transparent;
  border-top-color: currentColor;
  border-bottom: 0;
  margin-left: 2px;
}

.tool.tight .drop {
  margin-left: -2px;
}

.sep {
  width: 1px;
  height: 16px;
  margin: 0 2px 0 3px;
  background: #b8b8b8;
}

.grip {
  width: 2px;
  height: 14px;
  margin: 0 1px 0 4px;
  background: repeating-linear-gradient(#b0b0b0 0 2px, transparent 2px 4px);
}

.more {
  margin-left: auto;
  align-self: flex-start;
  padding-right: 2px;
  font-size: 16px;
  line-height: 16px;
}

.combo {
  position: relative;
  height: 22px;
  margin: 0 1px 0 2px;
  background: linear-gradient(90deg, #fff 0 calc(100% - 11px), #f5f5f5 0);
}

.combo.s {
  width: 57px;
}

.combo.m {
  width: 69px;
}

.combo select {
  width: 100%;
  height: 22px;
  padding: 0 2px;
  appearance: none;
}

.combo::after {
  content: "";
  position: absolute;
  right: 3px;
  top: 10px;
  border: 3px solid transparent;
  border-top-color: #000;
  border-bottom: 0;
  pointer-events: none;
}

.caption {
  padding-left: 6px;
}
</style>

<style scoped>
.app {
  display: flex;
  flex-direction: column;
  height: 100vh;
  overflow: hidden;
  color: #000;
  font: 12px/16px "Open Sans", "Noto Sans CJK SC", sans-serif;
}

.titlebar {
  position: relative;
  display: flex;
  align-items: center;
  height: 23px;
  padding-left: 2px;
  gap: 6px;
  background: #fff;
}

.titlebar h1 {
  margin: 0;
  font-size: 12px;
  font-weight: 400;
  white-space: nowrap;
}

.titlebar .path {
  font-size: 13px;
}

.win-btns {
  display: flex;
  margin-left: auto;
  padding-right: 3px;
}

.win-btns button {
  display: grid;
  place-items: center;
  width: 45px;
}

.ime {
  position: absolute;
  z-index: 2;
  left: 872px;
  top: 3px;
  display: flex;
  align-items: center;
  gap: 6px;
  height: 22px;
  padding: 0 4px 0 28px;
  border: 1px solid #b4c6dc;
  background: #fff;
  color: #1a6fc8;
}

.ime b {
  font-size: 19px;
  font-weight: 600;
}

.ime-logo {
  position: absolute;
  left: -8px;
  top: -6px;
  width: 30px;
  height: 30px;
}

.ball {
  position: absolute;
  z-index: 2;
  left: 1107px;
  top: -29px;
  display: flex;
  align-items: flex-end;
  justify-content: center;
  box-sizing: border-box;
  width: 48px;
  height: 48px;
  padding-bottom: 3px;
  border: 2px solid #e8f2e8;
  border-radius: 50%;
  background: #3cc15c;
  box-shadow: 0 1px 3px #666;
  color: #fff;
  font-weight: 700;
  line-height: 12px;
}

.menubar {
  display: flex;
  align-items: center;
  height: 30px;
  background: #f0f0f0;
}

.menu-main {
  display: flex;
  align-items: center;
  flex: 0 0 936px;
  gap: 10px;
  box-sizing: border-box;
  padding-left: 7px;
  white-space: nowrap;
}

.menu-main .strip {
  margin-left: -5px;
  background: none;
}

.tip {
  flex: 0 0 158px;
  padding-left: 30px;
  color: #0e6e6e;
  text-decoration: none;
}

.user {
  flex: 1;
  margin-left: 2px;
}

.main-tools {
  display: flex;
  height: 30px;
  align-items: center;
  gap: 2px;
  padding-left: 1px;
}

.file {
  flex: 0 0 148px;
}

.main {
  flex: 0 0 545px;
}

.view {
  flex: 1;
  margin-left: 3px;
}

.body {
  display: flex;
  flex: 1;
  min-height: 0;
  padding-top: 1px;
}

.side {
  display: flex;
  flex-direction: column;
  flex: 0 0 253px;
  padding-bottom: 2px;
}

.side-title {
  display: flex;
  align-items: center;
  height: 16px;
  margin-bottom: 1px;
  gap: 2px;
  background: #0054e3;
  color: #fff;
}

.side-title .song {
  flex: 1;
}

.side-tab {
  height: 22px;
  border: 1px solid #a0a0a0;
  border-top-color: #fff;
  background: #f0f0f0;
  font-family: "Noto Sans CJK SC", sans-serif;
}

.side-ops {
  display: flex;
  align-items: center;
  gap: 7px;
  height: 27px;
  padding-left: 6px;
  border: solid #a0a0a0;
  border-width: 0 1px;
  background: linear-gradient(#fcfcfc, #f0f0f0);
}

.tree {
  display: flex;
  flex: 1;
  min-height: 0;
  margin: 0 1px 2px 2px;
  overflow: hidden;
  border: 1px solid #828790;
  background: #fff;
}

.tree ul {
  flex: 1;
  margin: 0;
  padding: 1px 0 0;
  overflow: hidden;
  list-style: none;
}

.tree li {
  position: relative;
  display: flex;
  align-items: center;
  height: 16px;
  line-height: 16px;
}

.branch {
  padding-left: 3px;
}

.fold {
  width: 16px;
  margin-right: 3px;
  color: #999;
}

.fold.open {
  color: #333;
}

.node-name {
  padding: 0 1px 0 4px;
}

.leaf {
  padding-left: 40px;
}

.leaf::before {
  content: "";
  position: absolute;
  left: 12px;
  top: 0;
  width: 18px;
  height: 16px;
  border: dotted #999;
  border-width: 0 1px;
}

.leaf.last::before {
  height: 9px;
}

.leaf::after {
  content: "";
  position: absolute;
  left: 32px;
  top: 8px;
  width: 9px;
  border-top: 1px dotted #999;
}

.node-icon {
  padding: 0 1px 0 2px;
}

.node-name.selected,
.node-icon.selected {
  background: #d9d9d9;
}

.fresh {
  align-self: flex-start;
  margin-left: 1px;
  font: 9px/10px "DejaVu Sans", sans-serif;
  color: #000;
  text-shadow: 0 0 1px #fd0, 1px 1px #fd0, -1px -1px #fd0, 1px -1px #fd0, -1px 1px #fd0;
}

.vbar {
  display: flex;
  flex-direction: column;
  flex: 0 0 16px;
  background: #f0f0f0;
  color: #505050;
}

.vbar .thumb {
  flex: 0 0 76%;
  background: #cdcdcd;
}

.tree .vbar {
  justify-content: space-between;
  padding: 1px 0;
}

.tree .thumb {
  margin-top: auto;
  margin-bottom: 11px;
}

.work {
  display: flex;
  flex-direction: column;
  flex: 1;
  min-width: 0;
  margin-left: 5px;
  padding-right: 1px;
}

.row {
  display: flex;
  align-items: center;
  height: 27px;
}

.apart {
  justify-content: space-between;
}

.axis {
  margin-right: 44px;
}

.stub {
  width: 29px;
  height: 20px;
  margin-left: 413px;
}

.draw {
  margin-left: 85px;
}

.viewport {
  position: relative;
  flex: 1;
  min-height: 0;
  margin-top: 2px;
  overflow: hidden;
  background: #000;
}

.scene {
  display: block;
  width: 100%;
  height: 100%;
}

.grid-lines path {
  fill: none;
  stroke: #f00;
}

.grid-lines .dim {
  stroke: #800000;
}

.axis-mark circle,
.axis-mark path {
  fill: none;
  stroke: #008000;
}

.axis-mark text {
  fill: #c8c8c8;
  font: 700 15px "Liberation Mono", monospace;
  text-anchor: middle;
}

.axis-name text {
  font: 13px "Liberation Sans", sans-serif;
  text-anchor: middle;
}

.layers {
  position: absolute;
  left: 10px;
  top: 3px;
  display: flex;
  flex-direction: column;
  width: 166px;
  height: 177px;
  background: #fff;
  box-shadow: 0 0 0 1px #777, 2px 3px 7px #0008;
}

.layers h2 {
  margin: 0;
  padding: 7px 8px 8px;
  color: #999;
  font-size: 12px;
  font-weight: 400;
}

.layer-list {
  flex: 1;
  margin: 0 1px;
  padding: 1px 3px;
  border: 1px solid #828790;
  font-family: "Noto Sans CJK SC", sans-serif;
  line-height: 12px;
}

.layer-list label {
  display: flex;
  align-items: center;
  gap: 4px;
  height: 12px;
}

input[type="checkbox"] {
  display: grid;
  place-items: center;
  box-sizing: border-box;
  width: 11px;
  height: 11px;
  border: 1px solid #888;
  background: #fff;
  appearance: none;
}

input[type="checkbox"]:checked::after {
  content: "";
  width: 6px;
  height: 3px;
  border: solid #444;
  border-width: 0 0 1px 1px;
  transform: rotate(-45deg);
}

.snap {
  height: 31px;
  gap: 1px;
}

.offset {
  display: flex;
  align-items: center;
  gap: 4px;
  margin-left: -2px;
  color: #808080;
}

.spin {
  position: relative;
  box-sizing: border-box;
  width: 58px;
  height: 23px;
  border: 1px solid #707070;
}

.spin.wide {
  width: 68px;
}

.spin input {
  box-sizing: border-box;
  width: 100%;
  height: 21px;
  padding-right: 18px;
  text-align: right;
}

.spin::before,
.spin::after {
  content: "";
  position: absolute;
  right: 4px;
  top: 4px;
  border: 3px solid transparent;
  border-top: 0;
  border-bottom-color: #666;
}

.spin::after {
  top: 15px;
  border-top: 3px solid #666;
  border-bottom: 0;
}

.divider {
  width: 1px;
  height: 16px;
  background: #b8b8b8;
}

.rot {
  display: flex;
  align-items: center;
  gap: 8px;
  color: #000;
}

.bars {
  display: flex;
  padding-bottom: 1px;
}

.handle {
  flex: 0 0 12px;
  padding-top: 14px;
  background: radial-gradient(circle, #b8b8b8 1px, transparent 1px) 2px 0 / 4px 4px;
  position: relative;
}

.handle .icon {
  position: absolute;
  left: 1px;
  top: 3px;
  width: 10px;
  height: 10px;
  border: 1px solid #555;
  background: #eee;
  box-sizing: border-box;
}

.bars-main {
  flex: 1;
  min-width: 0;
}

.bar-tools {
  margin: 2px 0 1px;
}

.grid-box {
  display: grid;
  grid-template-columns: minmax(0, 1fr) 16px;
  grid-template-rows: 153px 16px;
  padding: 1px;
  border: 1px solid #a0a0a0;
}

.grid-clip {
  overflow: hidden;
  background: #fff;
}

table {
  width: 1123px;
  table-layout: fixed;
  border-spacing: 0;
}

th,
td {
  box-sizing: border-box;
  height: 29px;
  padding: 0 1px;
  overflow: hidden;
  border: solid #bdbdbd;
  border-width: 0 1px 1px 0;
  font-weight: 400;
  text-align: left;
  white-space: nowrap;
}

td {
  background: #ccffdb;
}

th {
  background: linear-gradient(#fff, #f0f0f0);
  text-align: center;
}

thead th {
  height: 19px;
}

th.current {
  background: linear-gradient(#fcdca4, #f2bb58);
  color: #602040;
}

.first td,
.first th {
  height: 61px;
}

.first th {
  background: #ffd28c;
  color: #602040;
}

td.focus {
  background: #adebd9;
}

td.edge {
  border-right-color: #000;
}

td.mid {
  text-align: center;
}

.blank th,
.blank td {
  height: 19px;
}

.blank td {
  background: #fff;
}

.grade {
  width: 9px;
  height: 10px;
  vertical-align: middle;
}

.shape {
  padding: 0;
}

.shape svg {
  display: block;
  width: 200px;
  height: 28px;
}

.shape .tall {
  height: 60px;
}

.shape text {
  font: 11px "Liberation Sans", sans-serif;
}

.grid-box .thumb {
  flex: 0 0 47px;
}

.grid-box .vbar {
  padding: 2px 0;
}

.grid-box .vbar .icon:last-child {
  margin-top: auto;
}

.hbar {
  display: flex;
  align-items: center;
  grid-column: 1 / 3;
  padding-right: 18px;
  background: #f0f0f0;
  color: #505050;
}

.grid-box .hbar .thumb {
  flex: 0 0 64%;
  height: 15px;
  margin-right: auto;
  background: #cdcdcd;
}

.status {
  display: grid;
  grid-template-columns: 148px 77px 97px 46px 1fr 70px;
  gap: 3px;
  height: 21px;
}

.status span {
  line-height: 18px;
}

.status > span {
  padding-left: 1px;
  border: 1px solid #d4d4d4;
  background: linear-gradient(#fcfcfc, #f0f0f0);
  overflow: hidden;
}

.taskbar {
  display: flex;
  height: 40px;
  background: #010b0d;
  color: #fff;
}

.start {
  display: grid;
  place-items: center;
  width: 48px;
  background: #000;
}

.search {
  display: flex;
  align-items: center;
  flex: 0 0 344px;
  box-sizing: border-box;
  padding: 0 12px 0 9px;
  gap: 6px;
  background: #333;
  color: #a0a0a0;
}

.ring {
  box-sizing: border-box;
  width: 21px;
  height: 21px;
  border: 3px solid #eee;
  border-radius: 50%;
}

.search input {
  flex: 1;
  font-size: 14px;
  outline: 0;
}

.search input::placeholder {
  color: #a0a0a0;
}

.apps {
  display: flex;
  gap: 1px;
  padding-left: 3px;
}

.apps button {
  display: grid;
  place-items: center;
  width: 48px;
}

.apps .icon {
  width: 22px;
  height: 22px;
}

.bars2 {
  align-self: center;
  width: 1px;
  height: 16px;
  margin: 0 10px;
  border: solid #33403f;
  border-width: 0 1px;
}

.apps .run {
  box-sizing: border-box;
  border-bottom: 2px solid #76b9ed;
}

.apps .current {
  background: #364245;
}

.tray {
  display: flex;
  align-items: center;
  gap: 8px;
  margin-left: auto;
}

.lines {
  display: flex;
  flex-direction: column;
  align-items: center;
  line-height: 18px;
}

.cpu {
  margin-right: 8px;
}

.clock {
  width: 62px;
  margin-left: 8px;
}

.tray b {
  width: 16px;
  text-align: center;
  font-size: 15px;
  font-weight: 600;
}

.notice {
  display: grid;
  place-items: center;
  width: 56px;
  height: 40px;
  margin: 0 4px 0 -8px;
  border-right: 1px solid #555;
}
</style>
